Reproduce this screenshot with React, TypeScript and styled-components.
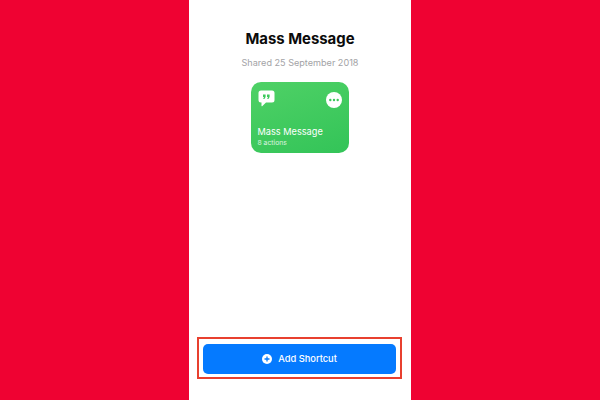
import React from "react";
import styled, { createGlobalStyle } from "styled-components";

const GlobalStyle = createGlobalStyle`
  html, body {
    margin: 0;
    padding: 0;
    height: 100%;
  }
  #root {
    height: 100%;
  }
`;

const Page = styled.div`
  width: 600px;
  height: 400px;
  background-color: #ef0232;
  display: flex;
  justify-content: center;
  overflow: hidden;
  font-family: Inter, "Liberation Sans", sans-serif;
`;

const Phone = styled.main`
  width: 222px;
  height: 400px;
  background-color: #ffffff;
  display: flex;
  flex-direction: column;
  align-items: center;
  padding-top: 30px;
  box-sizing: border-box;
`;

const Title = styled.h1`
  margin: 0;
  font-size: 14.9px;
  line-height: 18px;
  font-weight: 700;
  color: #0b0b0b;
`;

const Subtitle = styled.p`
  margin: 9px 0 0;
  font-size: 9.1px;
  line-height: 12px;
  color: #a3a3a6;
`;

const Card = styled.section`
  margin: 13px 1px 0 0;
  width: 98px;
  height: 71px;
  border-radius: 10px;
  background: linear-gradient(160deg, #4fd166 0%, #33c458 100%);
  padding: 8px 7px 6px;
  box-sizing: border-box;
  display: flex;
  flex-direction: column;
  color: #ffffff;
`;

const CardIcons = styled.div`
  display: flex;
  justify-content: space-between;
  align-items: flex-start;
`;

const QuoteSvg = styled.svg`
  width: 17px;
  height: 17px;
`;

const MoreSvg = styled.svg`
  width: 16px;
  height: 16px;
  margin-top: 2px;
`;

const CardName = styled.div`
  margin-top: auto;
  font-size: 9.2px;
  line-height: 11px;
  font-weight: 400;
`;

const CardMeta = styled.div`
  margin-top: 1px;
  font-size: 6.8px;
  line-height: 9px;
  opacity: 0.8;
`;

const Spacer = styled.div`
  flex: 1;
`;

const Highlight = styled.div`
  width: 205px;
  height: 42px;
  margin: 0 1px 21px 0;
  padding-top: 1px;
  border: 2px solid #e8402f;
  box-sizing: border-box;
  display: flex;
  align-items: center;
  justify-content: center;
`;

const AddButton = styled.button`
  width: 193px;
  height: 30px;
  border: none;
  border-radius: 5px;
  background-color: #057aff;
  color: #ffffff;
  font-family: inherit;
  font-size: 9.3px;
  font-weight: 500;
  display: flex;
  align-items: center;
  justify-content: center;
  gap: 6px;
  padding: 0;
`;

const QuoteIcon = () => (
  <QuoteSvg viewBox="0 0 17 17">
    <path
      d="M3 .5h11a2.500 2.500 0 0 1 2.500 2.500v7a2.500 2.500 0 0 1-2.500 2.500H8l-3.600 3.600a.5.5 0 0 1-.9-.4V12.500H3A2.500 2.500 0 0 1 .5 10V3A2.500 2.500 0 0 1 3 .5z"
      fill="#fff"
    />
    <path d="M5 4.500h2.600v2.400L6.400 9H5.200l.8-1.900H5z" fill="#3cc95c" />
    <path d="M9 4.500h2.600v2.400L10.400 9H9.200l.8-1.900H9z" fill="#3cc95c" />
  </QuoteSvg>
);

const MoreIcon = () => (
  <MoreSvg viewBox="0 0 16 16">
    <circle cx="8" cy="8" r="8" fill="#fff" />
    <circle cx="4.300" cy="8" r="1.200" fill="#3cc95c" />
    <circle cx="8" cy="8" r="1.200" fill="#3cc95c" />
    <circle cx="11.700" cy="8" r="1.200" fill="#3cc95c" />
  </MoreSvg>
);

const PlusCircleIcon = () => (
  <svg width="10" height="10" viewBox="0 0 10 10">
    <circle cx="5" cy="5" r="5" fill="#fff" />
    <path d="M5 2.500v5M2.500 5h5" stroke="#057aff" strokeWidth="1.300" />
  </svg>
);

function App() {
  return (
    <Page>
      <GlobalStyle />
      <Phone>
        <Title>Mass Message</Title>
        <Subtitle>Shared 25 September 2018</Subtitle>
        <Card>
          <CardIcons>
            <QuoteIcon />
            <MoreIcon />
          </CardIcons>
          <CardName>Mass Message</CardName>
          <CardMeta>8 actions</CardMeta>
        </Card>
        <Spacer />
        <Highlight>
          <AddButton>
            <PlusCircleIcon />
            Add Shortcut
          </AddButton>
        </Highlight>
      </Phone>
    </Page>
  );
}

export default App;
